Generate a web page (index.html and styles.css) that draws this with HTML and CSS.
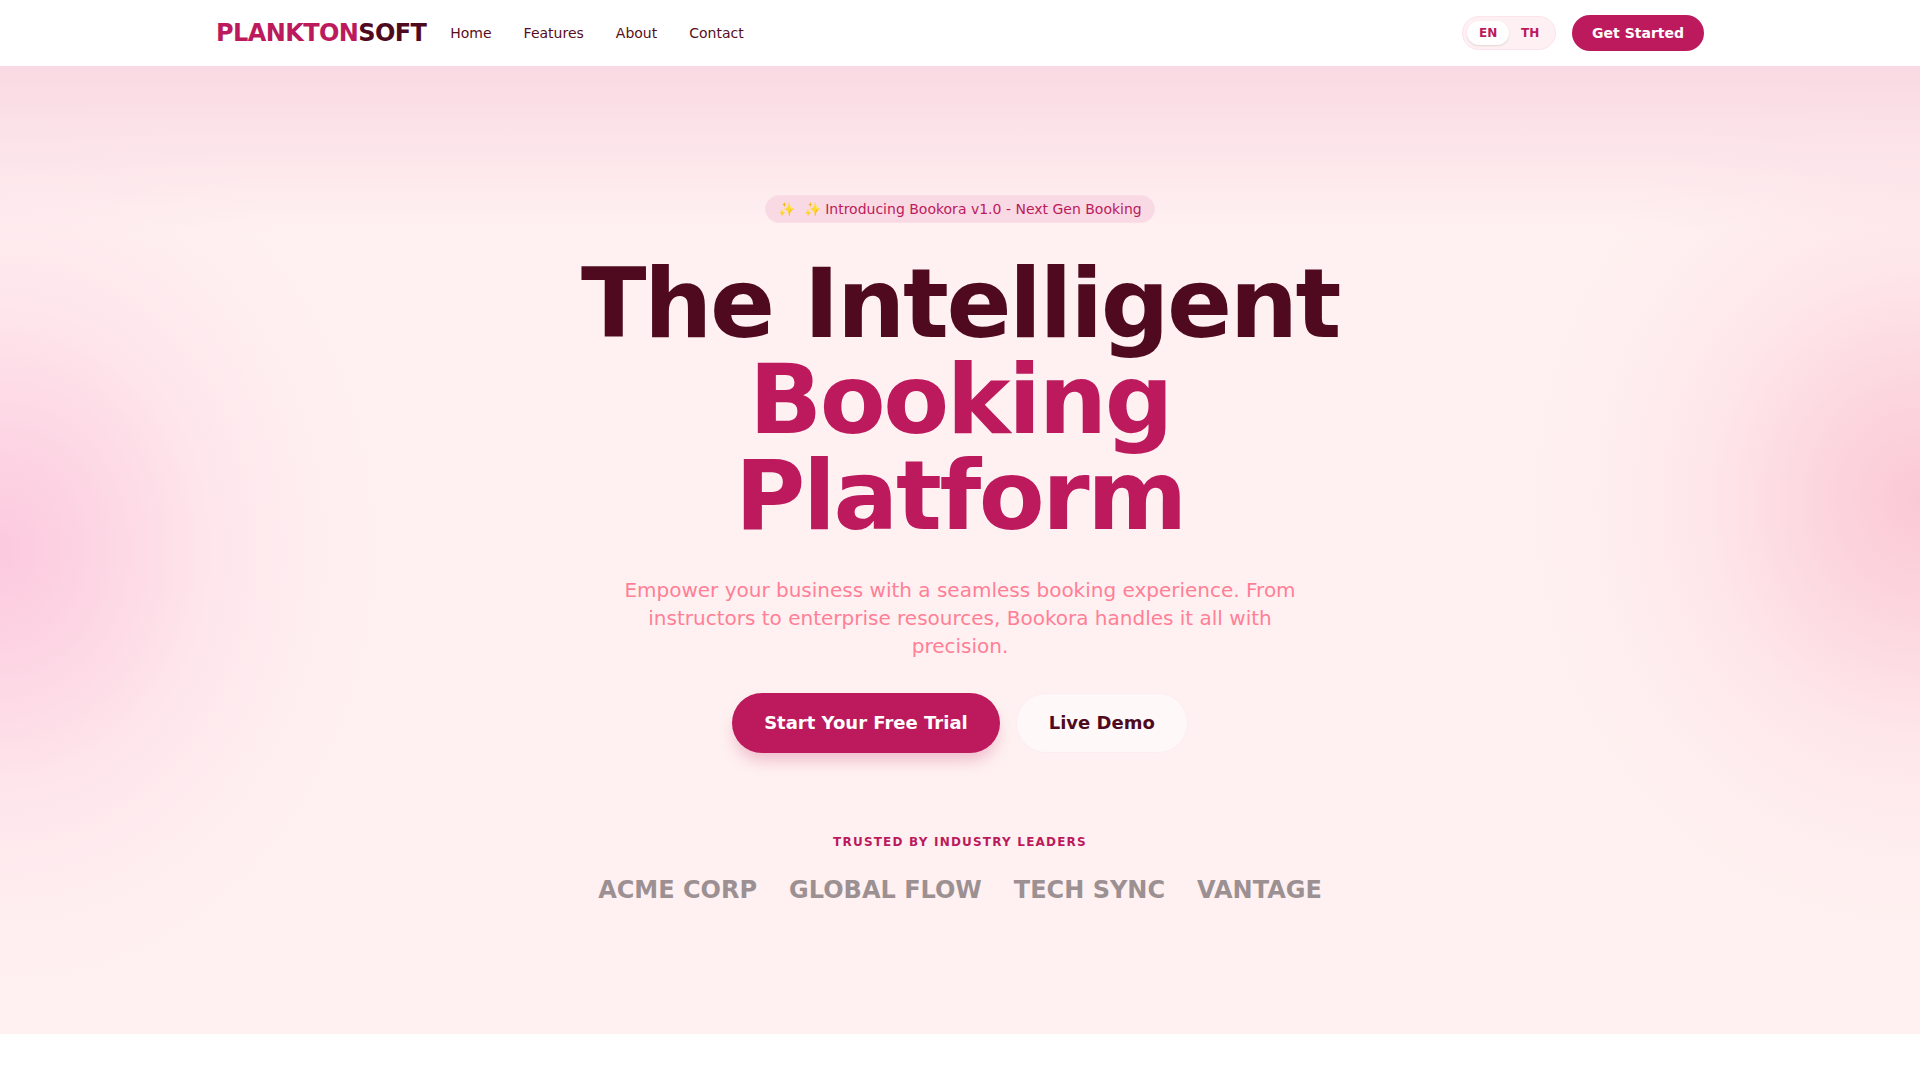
FILE: index.html
```html
<!DOCTYPE html>
<html lang="en">
<head>
    <meta charset="UTF-8">
    <meta name="viewport" content="width=device-width, initial-scale=1.0">
    <title>Bookora</title>
    <link rel="stylesheet" href="styles.css">
</head>
<body>
    <nav class="navbar">
        <div class="nav-inner">
            <div class="nav-left">
                <a class="logo" href="#">PLANKTON<span>SOFT</span></a>
                <div class="nav-links">
                    <a href="#">Home</a>
                    <a href="#">Features</a>
                    <a href="#">About</a>
                    <a href="#">Contact</a>
                </div>
            </div>
            <div class="nav-right">
                <div class="lang-switch">
                    <button class="lang-btn active">EN</button>
                    <button class="lang-btn">TH</button>
                </div>
                <a class="nav-cta" href="#">Get Started</a>
            </div>
        </div>
    </nav>

    <section class="hero">
        <div class="badge"><span class="badge-icon">✨</span> ✨ Introducing Bookora v1.0 - Next Gen Booking</div>
        <h1>The Intelligent <span>Booking Platform</span></h1>
        <p class="lead">Empower your business with a seamless booking experience. From instructors to enterprise resources, Bookora handles it all with precision.</p>
        <div class="hero-actions">
            <a class="btn btn-primary" href="#">Start Your Free Trial</a>
            <a class="btn btn-secondary" href="#">Live Demo</a>
        </div>
        <div class="trusted">
            <p>TRUSTED BY INDUSTRY LEADERS</p>
            <div class="trusted-logos">
                <span>ACME CORP</span>
                <span>GLOBAL FLOW</span>
                <span>TECH SYNC</span>
                <span>VANTAGE</span>
            </div>
        </div>
    </section>
</body>
</html>
```

FILE: styles.css
```css
* {
    box-sizing: border-box;
}

body {
    margin: 0;
    min-height: 100vh;
    background-color: #ffffff;
    font-family: "DejaVu Sans", sans-serif;
    color: #4f0a1f;
}

a {
    text-decoration: none;
}

.navbar {
    height: 66px;
    background-color: #ffffff;
}

.nav-inner {
    max-width: 1536px;
    height: 100%;
    margin: 0 auto;
    padding: 0 24px;
    display: flex;
    justify-content: space-between;
    align-items: center;
}

.nav-left,
.nav-right,
.nav-links {
    display: flex;
    align-items: center;
}

.nav-left {
    gap: 24px;
}

.nav-links {
    gap: 32px;
}

.nav-links a {
    font-size: 14px;
    color: #590d22;
}

.logo {
    font-size: 24px;
    font-weight: 700;
    letter-spacing: -0.6px;
    color: #bc1a5c;
}

.logo span {
    color: #4f0a1f;
}

.nav-right {
    gap: 16px;
}

.lang-switch {
    display: flex;
    padding: 4px;
    border: 1px solid #fde4ec;
    border-radius: 999px;
    background-color: #fff0f3;
}

.lang-btn {
    width: 42px;
    height: 24px;
    padding: 0;
    border: none;
    border-radius: 999px;
    background: none;
    font-family: inherit;
    font-size: 12px;
    font-weight: 700;
    color: #bc1a5c;
}

.lang-btn.active {
    background-color: #ffffff;
    box-shadow: 0 1px 2px rgba(0, 0, 0, 0.12);
}

.nav-cta {
    padding: 10px 20px;
    border-radius: 999px;
    background-color: #bc1a5c;
    color: #ffffff;
    font-size: 14px;
    font-weight: 700;
}

.hero {
    height: 968px;
    display: flex;
    flex-direction: column;
    align-items: center;
    padding-top: 129px;
    background:
        linear-gradient(#f9d9e3 0, rgba(249, 217, 227, 0) 165px),
        radial-gradient(ellipse 400px 460px at 0 50%,
            rgba(252, 201, 222, 1) 0,
            rgba(252, 201, 222, 0.66) 27%,
            rgba(252, 201, 222, 0.28) 53%,
            rgba(252, 201, 222, 0.07) 80%,
            rgba(252, 201, 222, 0) 100%),
        radial-gradient(ellipse 400px 440px at 100% 45%,
            rgba(251, 201, 214, 1) 0,
            rgba(251, 201, 214, 0.66) 27%,
            rgba(251, 201, 214, 0.28) 53%,
            rgba(251, 201, 214, 0.07) 80%,
            rgba(251, 201, 214, 0) 100%),
        #fff1f1;
}

.badge {
    padding: 3px 12px;
    border: 1px solid #fadfe8;
    border-radius: 999px;
    background-color: #f9d9e3;
    font-size: 14px;
    line-height: 20px;
    color: #bc1a5c;
}

.badge-icon {
    margin-right: 4px;
}

h1 {
    width: 896px;
    margin: 33px 0 32px;
    text-align: center;
    font-size: 96px;
    line-height: 96px;
    font-weight: 700;
    letter-spacing: -2.4px;
    color: #4f0a1f;
}

h1 span {
    color: #bc1a5c;
}

.lead {
    width: 672px;
    margin: 0 0 33px;
    text-align: center;
    font-size: 20px;
    line-height: 28px;
    color: #ff7f97;
}

.hero-actions {
    display: flex;
    gap: 16px;
}

.btn {
    height: 60px;
    padding: 0 32px;
    border-radius: 999px;
    font-size: 18px;
    font-weight: 700;
    line-height: 60px;
}

.btn-primary {
    background-color: #bc1a5c;
    color: #ffffff;
    box-shadow: 0 10px 15px -3px rgba(188, 26, 92, 0.25);
}

.btn-secondary {
    border: 1px solid #fdedf2;
    background-color: #fff8f9;
    color: #4f0a1f;
    line-height: 58px;
}

.trusted {
    margin-top: 81px;
    text-align: center;
}

.trusted p {
    margin: 0 0 24px;
    font-size: 12px;
    line-height: 16px;
    font-weight: 700;
    letter-spacing: 1.2px;
    color: #bc1a5c;
}

.trusted-logos {
    display: flex;
    justify-content: center;
    gap: 32px;
    font-size: 24px;
    line-height: 32px;
    font-weight: 700;
    color: #9c9093;
}
```
